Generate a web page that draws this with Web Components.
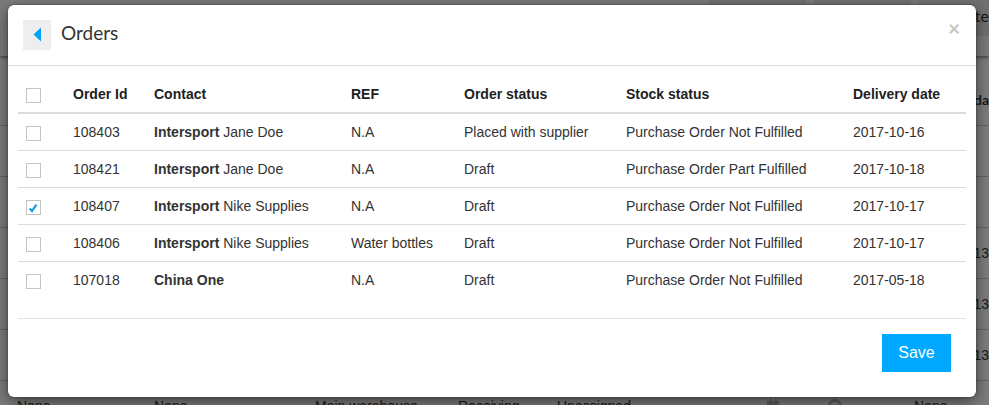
<!DOCTYPE html>
<html lang="en">
<head>
<meta charset="utf-8">
<title>Orders</title>
<style>
html, body { height: 100%; }
body { margin: 0; overflow: hidden; font: 14px/20px "Liberation Sans", Arial, sans-serif; color: #333; background: #fff; }
</style>
</head>
<body>
<orders-app></orders-app>

<script>
class BackdropPage extends HTMLElement {
  constructor() {
    super();
    this.attachShadow({ mode: 'open' }).innerHTML = `
<style>
:host { display: block; height: 100%; overflow: hidden; color: #333; background: #fbfbfb; }
header { box-sizing: border-box; height: 56px; display: flex; justify-content: flex-end; align-items: flex-start; gap: 8px; background: #f4f4f4; box-shadow: 0 1px 4px rgba(0,0,0,.6); position: relative; }
button { box-sizing: border-box; height: 36px; width: 97px; border: 0; background: #e0e0e0; font: 16px/28px Lato, sans-serif; color: #333; padding: 0 0 4px; }
button:last-child { width: 70px; text-align: right; white-space: nowrap; }
table { width: 100%; border-collapse: separate; border-spacing: 0; margin-top: 19px; }
th, td { box-sizing: border-box; height: 51px; padding: 0; text-align: left; border-bottom: 1px solid #c8c8c8; white-space: nowrap; }
th { font: bold 14px/20px Lato, sans-serif; }
td { font-size: 14px; }
th:first-child, td:first-child { padding-left: 17px; }
.end { text-align: right; }
svg { display: block; fill: #bbb; }
</style>
<header><button type="button" aria-label="Action one"></button><button type="button" aria-label="Action two"></button><button type="button">te</button></header>
<table>
<colgroup><col style="width:154px"><col style="width:161px"><col style="width:143px"><col style="width:99px"><col style="width:210px"><col style="width:61px"><col style="width:86px"><col style="width:75px"></colgroup>
<thead><tr><th colspan="7"></th><th class="end">da</th></tr></thead>
<tbody>
<tr><td colspan="8"></td></tr><tr><td colspan="8"></td></tr>
<tr><td colspan="7"></td><td class="end">13</td></tr>
<tr><td colspan="7"></td><td class="end">13</td></tr>
<tr><td colspan="7"></td><td class="end">13</td></tr>
<tr><td>None</td><td>None</td><td>Main warehouse</td><td>Receiving</td><td>Unassigned</td>
<td><svg width="12" height="14" viewBox="0 0 12 14"><path d="M0 2h12v12H0zM2 0h2v2H2zM8 0h2v2H8z"/></svg></td>
<td><svg width="14" height="14" viewBox="0 0 14 14"><path fill-rule="evenodd" d="M7 0a7 7 0 1 0 0 14A7 7 0 0 0 7 0zm0 3a4 4 0 1 1 0 8 4 4 0 0 1 0-8z"/></svg></td>
<td>None</td></tr>
</tbody>
</table>`;
  }
}
customElements.define('backdrop-page', BackdropPage);

class TickBox extends HTMLElement {
  constructor() {
    super();
    this.attachShadow({ mode: 'open' }).innerHTML = `
<style>
:host { display: block; height: 20px; }
label { display: grid; width: 15px; height: 15px; padding-top: 4px; }
input { appearance: none; grid-area: 1/1; box-sizing: border-box; width: 15px; height: 15px; margin: 0; border: 1px solid #c4c4c4; background: #fff; }
svg { grid-area: 1/1; display: none; z-index: 1; pointer-events: none; }
input:checked + svg { display: block; }
</style>
<label><input type="checkbox"><svg width="15" height="15" viewBox="0 0 15 15"><path d="M3.6 8.6 6 11.1 10.4 4.6" fill="none" stroke="#159ee8" stroke-width="2.2"/></svg></label>`;
  }
  connectedCallback() {
    const input = this.shadowRoot.querySelector('input');
    input.checked = this.hasAttribute('checked');
    input.setAttribute('aria-label', this.getAttribute('label'));
  }
}
customElements.define('tick-box', TickBox);

class OrdersTable extends HTMLElement {
  constructor() {
    super();
    const rows = [
      ['108403', 'Intersport', 'Jane Doe', 'N.A', 'Placed with supplier', 'Purchase Order Not Fulfilled', '2017-10-16'],
      ['108421', 'Intersport', 'Jane Doe', 'N.A', 'Draft', 'Purchase Order Part Fulfilled', '2017-10-18'],
      ['108407', 'Intersport', 'Nike Supplies', 'N.A', 'Draft', 'Purchase Order Not Fulfilled', '2017-10-17'],
      ['108406', 'Intersport', 'Nike Supplies', 'Water bottles', 'Draft', 'Purchase Order Not Fulfilled', '2017-10-17'],
      ['107018', 'China One', '', 'N.A', 'Draft', 'Purchase Order Not Fulfilled', '2017-05-18']
    ];
    const widths = [47, 81, 197, 113, 162, 227, 121];
    this.attachShadow({ mode: 'open' }).innerHTML = `
<style>
:host { display: block; }
table { width: 100%; border-collapse: separate; border-spacing: 0; }
th, td { padding: 8px; text-align: left; vertical-align: top; white-space: nowrap; }
th { border-bottom: 2px solid #dcdcdc; color: #1e1e1e; }
td { border-bottom: 1px solid #dcdcdc; }
tr:last-child td { border-bottom: 0; }
</style>
<table>
<colgroup>${widths.map(w => `<col style="width:${w}px">`).join('')}</colgroup>
<thead><tr><th><tick-box label="Select all orders"></tick-box></th><th>Order Id</th><th>Contact</th><th>REF</th><th>Order status</th><th>Stock status</th><th>Delivery date</th></tr></thead>
<tbody>${rows.map(([id, company, person, ...rest]) => `<tr><td><tick-box label="Select order ${id}"${id === '108407' ? ' checked' : ''}></tick-box></td><td>${id}</td><td><b>${company}</b> ${person}</td>${rest.map(v => `<td>${v}</td>`).join('')}</tr>`).join('')}</tbody>
</table>`;
  }
}
customElements.define('orders-table', OrdersTable);

class ModalDialog extends HTMLElement {
  constructor() {
    super();
    this.attachShadow({ mode: 'open' }).innerHTML = `
<style>
:host { display: block; background: #fff; border-radius: 6px; box-shadow: 0 5px 15px rgba(0,0,0,.5), 0 0 2px rgba(0,0,0,.5); }
header { display: flex; align-items: flex-start; gap: 10px; padding: 15px; border-bottom: 1px solid #dcdcdc; }
button { font: inherit; border: 0; margin: 0; padding: 0; cursor: pointer; }
.back { width: 28px; height: 30px; background: #eee; display: grid; place-items: center; }
h1 { flex: 1; margin: 0; font: 19px/26px Lato, sans-serif; }
.close { width: 14px; height: 16px; background: none; font: 900 21px/16px Lato, sans-serif; color: #c8c8c8; }
main { padding: 10px 10px 20px; }
footer { margin: 0 10px; padding: 15px 15px 25px; border-top: 1px solid #e0e0e0; text-align: right; }
.save { width: 69px; height: 38px; background: #00a8ff; color: #fff; font-size: 16px; vertical-align: top; }
</style>
<header><button type="button" class="back" aria-label="Back"><svg width="28" height="30" viewBox="0 0 28 30"><path d="M18 7.5v14L10.5 14.5z" fill="#00a2f5"/></svg></button>
<h1><slot name="title"></slot></h1><button type="button" class="close" aria-label="Close">×</button></header>
<main><slot></slot></main>
<footer><button type="button" class="save">Save</button></footer>`;
  }
}
customElements.define('modal-dialog', ModalDialog);

class OrdersApp extends HTMLElement {
  constructor() {
    super();
    this.attachShadow({ mode: 'open' }).innerHTML = `
<style>
:host { display: block; height: 100%; }
.overlay { position: absolute; inset: 0; overflow: hidden; background: rgba(0,0,0,.5); padding: 5px 13px 8px 8px; }
</style>
<backdrop-page></backdrop-page>
<div class="overlay"><modal-dialog role="dialog" aria-label="Orders"><span slot="title">Orders</span><orders-table></orders-table></modal-dialog></div>`;
  }
}
customElements.define('orders-app', OrdersApp);
</script>
</body>
</html>
